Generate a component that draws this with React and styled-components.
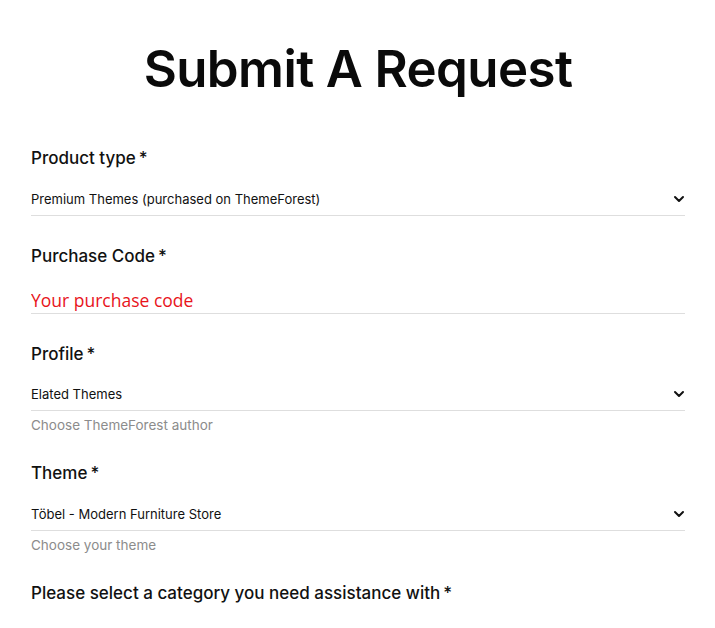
import React from 'react';
import styled, { createGlobalStyle } from 'styled-components';

const GlobalStyle = createGlobalStyle`
  *, *::before, *::after {
    box-sizing: border-box;
  }
  body {
    margin: 0;
    background: #fff;
    font-family: Inter, "Noto Sans", sans-serif;
    color: #111;
  }
`;

const Page = styled.div`
  padding: 36px 30px 0 31px;
`;

const Title = styled.h1`
  margin: 0 0 45px;
  font-size: 51px;
  line-height: 65px;
  font-weight: 600;
  text-align: center;
  letter-spacing: -0.6px;
  color: #0a0a0a;
`;

const Field = styled.div`
  display: flex;
  flex-direction: column;
  margin-bottom: ${({ $hint }) => ($hint ? '27px' : '28px')};
`;

const Label = styled.label`
  font-size: 17px;
  line-height: 24px;
  font-weight: 500;
  color: #111;

  span {
    margin-left: 3px;
  }
`;

const SelectBox = styled.div`
  display: flex;
  align-items: center;
  justify-content: space-between;
  height: 33px;
  margin-top: 12.5px;
  border-bottom: 1px solid #dedede;
  font-size: 13px;
  color: #111;
`;

const Chevron = styled.svg`
  width: 12px;
  height: 12px;
`;

const Input = styled.input`
  height: 33px;
  margin-top: 13px;
  padding: 7px 0 0;
  border: none;
  border-bottom: 1px solid #dedede;
  outline: none;
  font-family: "Open Sans", "Noto Sans", sans-serif;
  font-size: 17.5px;
  background: transparent;

  &::placeholder {
    color: #e8141b;
    opacity: 1;
  }
`;

const Hint = styled.div`
  margin-top: 5px;
  font-size: 13.5px;
  line-height: 18px;
  color: #8c8c8c;
`;

const Select = ({ value }) => (
  <SelectBox>
    {value}
    <Chevron viewBox="0 0 12 12" fill="none">
      <path d="M2 4l4 4 4-4" stroke="#111" strokeWidth="2" strokeLinecap="round" strokeLinejoin="round" />
    </Chevron>
  </SelectBox>
);

const App = () => (
  <Page>
    <GlobalStyle />
    <Title>Submit A Request</Title>

    <Field>
      <Label>Product type<span>*</span></Label>
      <Select value="Premium Themes (purchased on ThemeForest)" />
    </Field>

    <Field>
      <Label>Purchase Code<span>*</span></Label>
      <Input placeholder="Your purchase code" />
    </Field>

    <Field $hint>
      <Label>Profile<span>*</span></Label>
      <Select value="Elated Themes" />
      <Hint>Choose ThemeForest author</Hint>
    </Field>

    <Field $hint>
      <Label>Theme<span>*</span></Label>
      <Select value="Töbel - Modern Furniture Store" />
      <Hint>Choose your theme</Hint>
    </Field>

    <Field>
      <Label>Please select a category you need assistance with<span>*</span></Label>
    </Field>
  </Page>
);

export default App;
